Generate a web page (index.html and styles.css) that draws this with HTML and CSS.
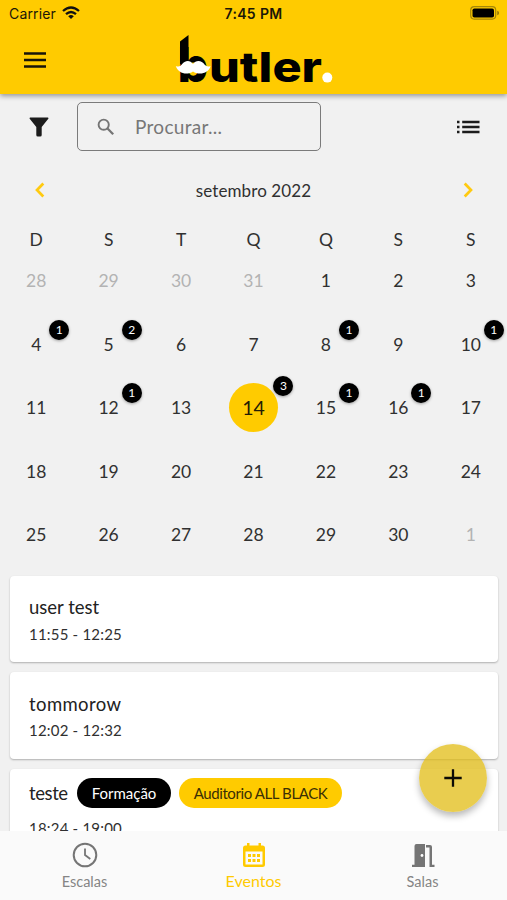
FILE: index.html
```html
<!DOCTYPE html>
<html lang="pt">
<head>
<meta charset="utf-8">
<title>Butler</title>
<link rel="stylesheet" href="styles.css">
</head>
<body>
<div class="app">
  <header class="header">
    <div class="status">
      <div class="carrier"><span class="carrier-name">Carrier</span>
        <svg width="18" height="14" viewBox="0 0 18 14" fill="none" stroke="#111" stroke-width="2.3"><path d="M1 5Q9-2 17 5M4 8.2Q9 3.8 14 8.2"/><path d="M6.2 10.2Q9 8 11.8 10.2L9 13Z" fill="#111" stroke="none"/></svg>
      </div>
      <span class="clock">7:45 PM</span>
      <svg class="battery" width="30" height="14" viewBox="0 0 30 14"><rect x=".7" y=".7" width="25" height="12.4" rx="3.5" fill="none" stroke="#a58707" stroke-width="1.2"/><rect x="2.5" y="2.5" width="21.5" height="9" rx="1.8"/><path d="M27.3 4.8Q29 5.3 29 7t-1.7 2.2z" fill="#8d7308"/></svg>
    </div>
    <div class="appbar">
      <svg class="menu" width="24" height="18" viewBox="0 0 24 18"><path d="M1 2.5h22M1 9h22M1 15.5h22" stroke="#17150a" stroke-width="2.4"/></svg>
      <svg class="logo" width="160" height="66" viewBox="0 0 160 66">
        <path d="M5 13.500L13.500 7V36H5z"/>
        <text class="logo-text" x="2.500" y="54" font-size="48">b</text>
        <text class="logo-text" x="34" y="53.500" font-size="41" textLength="113" lengthAdjust="spacingAndGlyphs">utler</text>
        <circle cx="152.300" cy="49.600" r="5" fill="#fff"/>
        <path d="M18 36C21 31.500 27 32.500 29.500 36.500Q32 39.500 35.500 38C34 45.500 24 47.500 18 43.500C12 47.500 3 45.500 .8 38Q4.500 39.500 6.800 36.500C9.500 32.500 15 31.500 18 36z" fill="#fff"/>
      </svg>
    </div>
  </header>
  <div class="tools">
    <svg class="filter" width="20" height="20" viewBox="0 0 20 20"><path d="M1.200 .5h17.600q1.200 .2.500 1.300L12.700 10v8q0 1.500-1.500 1.500H8.800q-1.500 0-1.500-1.500v-8L.7 1.800Q0 .7 1.200.5z" fill="#1c1c1c"/></svg>
    <div class="search">
      <svg width="18" height="18" viewBox="0 0 18 18" fill="none" stroke="#757575" stroke-width="1.900"><circle cx="6.700" cy="6.700" r="5.100"/><path d="M10.500 10.500l5.700 5.700" stroke-width="2.300"/></svg>
      <span class="placeholder">Procurar...</span>
    </div>
    <svg class="list" width="23" height="14" viewBox="0 0 23 14"><path d="M0 2h2.500M5.200 2H22.500M0 7h2.500M5.200 7H22.500M0 12h2.500M5.200 12H22.500" stroke="#1c1c1c" stroke-width="2.500"/></svg>
  </div>
  <div class="month">
    <svg width="11" height="16" viewBox="0 0 11 16"><path d="M9.300 1.500L3 8l6.300 6.500" fill="none" stroke="#ffca10" stroke-width="2.700"/></svg>
    <span class="month-name">setembro 2022</span>
    <svg width="11" height="16" viewBox="0 0 11 16"><path d="M2.700 1.500L9 8l-6.300 6.500" fill="none" stroke="#ffca10" stroke-width="2.700"/></svg>
  </div>
  <div class="week"><span>D</span><span>S</span><span>T</span><span>Q</span><span>Q</span><span>S</span><span>S</span></div>
  <div class="days">
    <div class="day out">28</div><div class="day out">29</div><div class="day out">30</div><div class="day out">31</div><div class="day">1</div><div class="day">2</div><div class="day">3</div>
    <div class="day">4<b class="badge">1</b></div><div class="day">5<b class="badge">2</b></div><div class="day">6</div><div class="day">7</div><div class="day">8<b class="badge">1</b></div><div class="day">9</div><div class="day">10<b class="badge">1</b></div>
    <div class="day">11</div><div class="day">12<b class="badge">1</b></div><div class="day">13</div><div class="day today"><span class="disc">14</span><b class="badge">3</b></div><div class="day">15<b class="badge">1</b></div><div class="day">16<b class="badge">1</b></div><div class="day">17</div>
    <div class="day">18</div><div class="day">19</div><div class="day">20</div><div class="day">21</div><div class="day">22</div><div class="day">23</div><div class="day">24</div>
    <div class="day">25</div><div class="day">26</div><div class="day">27</div><div class="day">28</div><div class="day">29</div><div class="day">30</div><div class="day out">1</div>
  </div>
  <main class="events">
    <article class="card"><div class="row"><span class="title">user test</span></div><div class="time">11:55 - 12:25</div></article>
    <article class="card"><div class="row"><span class="title wide">tommorow</span></div><div class="time">12:02 - 12:32</div></article>
    <article class="card tagged"><div class="row"><span class="title short">teste</span><span class="chip dark">Formação</span><span class="chip gold">Auditorio ALL BLACK</span></div><div class="time">18:24 - 19:00</div></article>
  </main>
  <div class="fab"><svg width="18" height="18" viewBox="0 0 18 18"><path d="M9 .3v17.400M.3 9h17.400" stroke="#0c0b05" stroke-width="2.300"/></svg></div>
  <nav class="nav">
    <div class="tab"><svg width="26" height="26" viewBox="0 0 26 26" fill="none" stroke="#757575" stroke-width="2"><circle cx="13" cy="13" r="11.300"/><path d="M13 6.500V13l5.300 4" stroke-width="1.800"/></svg><span>Escalas</span></div>
    <div class="tab active"><svg width="26" height="26" viewBox="0 0 26 26"><path d="M4.500 3.500H6V1h2.500v2.500h9V1H20v2.500h1.500q2.500 0 2.500 2.500v16.500q0 2.500-2.500 2.500h-17Q2 25 2 22.500V6q0-2.500 2.500-2.500z" fill="#ffca00"/><path d="M4.500 9.500h17v13h-17z" fill="#fafafa"/><path d="M7 12h3v3H7zM11.500 12h3v3h-3zM16 12h3v3h-3zM7 17h3v3H7zM11.500 17h3v3h-3zM16 17h3v3h-3z" fill="#ffca00"/></svg><span>Eventos</span></div>
    <div class="tab"><svg width="26" height="26" viewBox="0 0 26 26"><path d="M2 22.700h2.500V4Q4.500 2 6.500 2H15v23H2zM16 3h4q2 0 2 2v17.700h2.500V25h-5V5.500H16z" fill="#757575"/><circle cx="12" cy="13.500" r="1.400" fill="#fff"/></svg><span>Salas</span></div>
  </nav>
</div>
</body>
</html>
```
FILE: styles.css
```css
* { box-sizing: border-box; }
body { margin: 0; background: #f1f1f1; font-family: Lato, "Liberation Sans", sans-serif; color: #303030; }
svg { display: block; flex: none; }
.app { position: relative; width: 507px; height: 900px; overflow: hidden; display: flex; flex-direction: column; }
.header { height: 94px; flex: none; background: #ffcb00; box-shadow: 0 2px 5px rgba(0,0,0,.38); position: relative; }
.status { height: 28px; padding: 0 7px 2px 9px; display: grid; grid-template-columns: 1fr auto 1fr; align-items: center; font-family: Inter, sans-serif; font-size: 14px; color: #1b1708; }
.carrier { display: flex; align-items: center; gap: 6px; }
.carrier-name { letter-spacing: .15px; }
.clock { font-weight: 600; letter-spacing: .35px; margin-left: -2px; }
.battery { justify-self: end; }
.appbar { height: 66px; display: flex; }
.menu { margin: 23px 0 0 23px; }
.logo { margin: 0 0 0 128px; overflow: visible; }
.logo-text { font-family: Inter, sans-serif; font-weight: 800; }
.tools { height: 66px; flex: none; display: flex; align-items: center; padding: 0 27px 0 29px; }
.search { margin: -1px 0 0 28px; width: 244px; height: 49px; border: 1px solid #7b7b7b; border-radius: 5px; display: flex; align-items: center; padding-left: 19px; gap: 20px; }
.placeholder { font-size: 19px; color: #777; letter-spacing: .3px; margin-top: -1px; }
.list { margin-left: auto; }
.month { height: 60px; flex: none; display: flex; align-items: center; justify-content: space-between; padding: 0 34px; }
.month-name { font-size: 17px; letter-spacing: .1px; }
.week { height: 38px; flex: none; display: grid; grid-template-columns: repeat(7, 1fr); align-items: center; text-align: center; font-size: 17.500px; }
.days { flex: none; height: 318px; display: grid; grid-template-columns: repeat(7, 1fr); grid-auto-rows: 63.500px; margin-top: -9px; }
.day { position: relative; display: flex; align-items: center; justify-content: center; font-size: 17.500px; }
.out { color: #b3b3b3; }
.disc { width: 49px; height: 49px; border-radius: 50%; background: #ffcb00; display: flex; align-items: center; justify-content: center; padding-bottom: 1px; font-size: 19.500px; color: #221c05; }
.badge { position: absolute; left: calc(50% + 13px); top: 7px; width: 20px; height: 20px; border-radius: 50%; background: #000; color: #fff; font-size: 12px; font-weight: 400; line-height: 20px; text-align: center; box-shadow: 0 1px 3px rgba(0,0,0,.35); }
.today .badge { left: calc(50% + 20px); top: 0; }
.events { flex: none; height: 264px; padding: 8.500px 9px 0 10px; display: flex; flex-direction: column; gap: 10px; }
.card { height: 86.500px; flex: none; background: #fff; border-radius: 4px; padding: 19px 19px; box-shadow: 0 1px 2px rgba(0,0,0,.28); }
.row { height: 25px; display: flex; align-items: center; }
.title { font-size: 18.500px; color: #222; white-space: nowrap; }
.wide { letter-spacing: .4px; }
.time { font-size: 15px; line-height: 20px; margin-top: 4px; letter-spacing: .2px; }
.tagged { padding-top: 9px; }
.tagged .row { height: 31px; }
.tagged .time { margin-top: 9px; }
.chip { height: 30px; border-radius: 15px; display: flex; align-items: center; justify-content: center; font-size: 15px; white-space: nowrap; }
.dark { width: 94px; margin-left: 9px; background: #000; color: #fff; }
.gold { width: 163px; margin-left: 8px; background: #ffcb00; color: #3a2f05; letter-spacing: -.4px; }
.short { width: 39px; letter-spacing: -.4px; }
.fab { position: absolute; left: 419px; top: 744px; width: 68px; height: 68px; border-radius: 50%; background: rgba(226,188,20,.75); box-shadow: 0 4px 7px rgba(0,0,0,.28); display: flex; align-items: center; justify-content: center; }
.nav { position: absolute; left: 0; right: 0; bottom: 0; height: 69px; background: #fafafa; display: grid; grid-template-columns: repeat(3, 1fr); color: #858585; font-size: 14.500px; }
.tab { display: flex; flex-direction: column; align-items: center; padding-top: 11px; }
.tab span { line-height: 20px; margin-top: 4px; }
.tab.active { color: #ffca00; }
.tab.active span { font-size: 16px; margin-top: 3px; }
```
